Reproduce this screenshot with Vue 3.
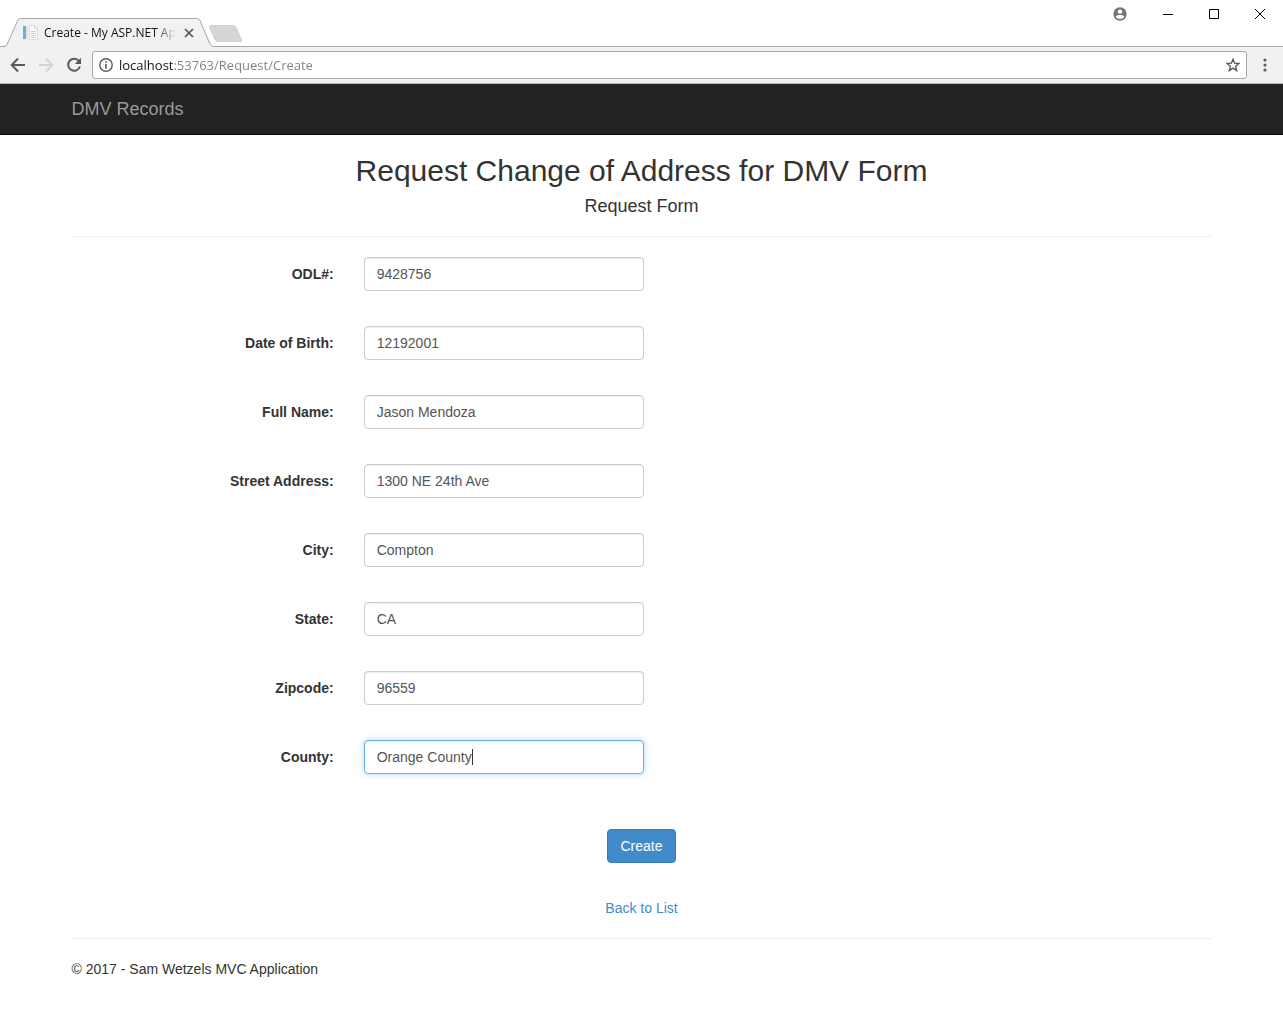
<script setup>
import { reactive, ref } from 'vue'

const address = ref('localhost:53763/Request/Create')
const fields = reactive([
  { id: 'odl', label: 'ODL#:', value: '9428756' },
  { id: 'dob', label: 'Date of Birth:', value: '12192001' },
  { id: 'name', label: 'Full Name:', value: 'Jason Mendoza' },
  { id: 'street', label: 'Street Address:', value: '1300 NE 24th Ave' },
  { id: 'city', label: 'City:', value: 'Compton' },
  { id: 'state', label: 'State:', value: 'CA' },
  { id: 'zip', label: 'Zipcode:', value: '96559' },
  { id: 'county', label: 'County:', value: 'Orange County', active: true },
])
</script>

<template>
  <div class="window">
    <header class="chrome">
      <div class="tabstrip">
        <div class="tab">
          <svg class="tab-shape" width="214" height="29" viewBox="0 0 214 29" aria-hidden="true">
            <path d="M0 29V28.500H4Q6 28.500 7 26.500L17.500 3Q18.500 .5 20.500 .5H197Q199 .5 200 2.500L210 26Q211 28.500 213 28.500H214V29Z" fill="#f1f1f1" />
            <path d="M0 28.500H4Q6 28.500 7 26.500L17.500 3Q18.500 .5 20.500 .5H197Q199 .5 200 2.500L210 26Q211 28.500 213 28.500H214" fill="none" stroke="#a8a8a8" />
          </svg>
          <svg class="favicon" width="16" height="16" viewBox="0 0 16 16" aria-hidden="true">
            <path d="M0 1H3V14H0Z" fill="#6fb3cd" />
            <path d="M3 2H5V14H3Z" fill="#dce6ea" />
            <path d="M6.500 .5H12L14.500 3V14.500H6.500Z" fill="#fafafa" stroke="#dcdfe1" />
            <path d="M11.500 1V3.500H14M8 6.500H13M8 8.500H13M8 10.500H13M8 12.500H13" fill="none" stroke="#ccd4d8" />
          </svg>
          <span class="tab-title">Create - My ASP.NET App</span>
          <button class="tab-close" type="button" aria-label="Close tab">
            <svg width="10" height="10" viewBox="0 0 10 10"><path d="M1 1L9 9M9 1L1 9" stroke="#555" stroke-width="1.700" /></svg>
          </button>
        </div>
        <button class="new-tab" type="button" aria-label="New tab">
          <svg width="36" height="18" viewBox="0 0 36 18"><path d="M3 .5H25Q27 .5 28 2.500L33.500 14.500Q34.500 16.500 32 16.500H10Q8 16.500 7 14.500L1.500 2.500Q.8 .5 3 .5Z" fill="#d6d6d6" stroke="#d0d0d0" /></svg>
        </button>
        <div class="window-controls">
          <button type="button" aria-label="Profile">
            <svg width="14" height="14" viewBox="0 0 14 14"><circle cx="7" cy="7" r="6.700" fill="#757575" /><circle cx="7" cy="4.600" r="2.200" fill="#fff" /><path d="M2.700 9.800C3.400 7.500 10.600 7.500 11.300 9.800C10.300 11.300 8.700 12 7 12S3.700 11.300 2.700 9.800Z" fill="#fff" /></svg>
          </button>
          <button type="button" aria-label="Minimize">
            <svg width="12" height="12" viewBox="0 0 12 12"><path d="M1 6.500H11" stroke="#000" /></svg>
          </button>
          <button type="button" aria-label="Maximize">
            <svg width="12" height="12" viewBox="0 0 12 12"><path d="M1.500 1.500H10.500V10.500H1.500Z" fill="none" stroke="#000" /></svg>
          </button>
          <button type="button" aria-label="Close">
            <svg width="12" height="12" viewBox="0 0 12 12"><path d="M1 1L11 11M11 1L1 11" stroke="#000" /></svg>
          </button>
        </div>
      </div>
      <div class="toolbar">
        <button type="button" aria-label="Back">
          <svg width="16" height="16" viewBox="0 0 16 16"><path d="M15 8H2M8 1.500L1.700 8L8 14.500" fill="none" stroke="#5a5a5a" stroke-width="2" /></svg>
        </button>
        <button type="button" aria-label="Forward" disabled>
          <svg width="16" height="16" viewBox="0 0 16 16"><path d="M1 8H14M8 1.500L14.300 8L8 14.500" fill="none" stroke="#d3d3d3" stroke-width="2" /></svg>
        </button>
        <button type="button" aria-label="Reload">
          <svg width="16" height="16" viewBox="0 0 16 16"><path d="M13 4.200A6 6 0 1 0 13.900 9.500" fill="none" stroke="#5a5a5a" stroke-width="2" /><path d="M15 .8V7H8.800Z" fill="#5a5a5a" /></svg>
        </button>
        <div class="omnibox">
          <svg width="14" height="14" viewBox="0 0 14 14" aria-hidden="true"><circle cx="7" cy="7" r="6.200" fill="none" stroke="#5a5a5a" stroke-width="1.400" /><path d="M6.200 3.200H7.800V4.800H6.200ZM6.200 6H7.800V10.800H6.200Z" fill="#5a5a5a" /></svg>
          <input v-model="address" class="address" type="text" aria-label="Address" spellcheck="false" />
          <button class="star" type="button" aria-label="Bookmark this page">
            <svg width="14" height="14" viewBox="0 0 14 14"><path d="M7 1.200L8.600 5.200L13 5.500L9.600 8.300L10.700 12.600L7 10.200L3.300 12.600L4.400 8.300L1 5.500L5.400 5.200Z" fill="none" stroke="#5a5a5a" stroke-width="1.400" /></svg>
          </button>
        </div>
        <button class="menu" type="button" aria-label="Menu">
          <svg width="4" height="14" viewBox="0 0 4 14"><circle cx="2" cy="2" r="1.600" fill="#5a5a5a" /><circle cx="2" cy="7" r="1.600" fill="#5a5a5a" /><circle cx="2" cy="12" r="1.600" fill="#5a5a5a" /></svg>
        </button>
      </div>
    </header>

    <nav class="navbar">
      <div class="container">
        <a class="brand" href="#">DMV Records</a>
      </div>
    </nav>

    <main class="container">
      <h2>Request Change of Address for DMV Form</h2>
      <h4>Request Form</h4>
      <hr />
      <form @submit.prevent>
        <div v-for="field in fields" :key="field.id" class="form-group">
          <label :for="field.id">{{ field.label }}</label>
          <div class="control">
            <input :id="field.id" v-model="field.value" type="text" :class="{ active: field.active }" />
            <span v-if="field.active" class="caret"></span>
          </div>
        </div>
        <button class="submit" type="submit">Create</button>
      </form>
      <a class="back" href="#">Back to List</a>
      <hr />
      <footer>© 2017 - Sam Wetzels MVC Application</footer>
    </main>
  </div>
</template>

<style>
body {
  margin: 0;
  background: #fff;
}
</style>

<style scoped>
* {
  box-sizing: border-box;
}

.window {
  font: 14px/20px "Liberation Sans", Arial, sans-serif;
  color: #333;
}

svg {
  display: block;
}

.chrome {
  font-family: "Open Sans", "Noto Sans", sans-serif;
}

.chrome button {
  display: flex;
  align-items: center;
  justify-content: center;
  padding: 0;
  border: 0;
  background: none;
}

.tabstrip {
  display: flex;
  align-items: flex-end;
  height: 47px;
  background: linear-gradient(#a8a8a8, #a8a8a8) bottom / 100% 1px no-repeat;
}

.tab {
  position: relative;
  display: flex;
  align-items: center;
  width: 214px;
  height: 29px;
  padding-left: 23px;
}

.tab-shape {
  position: absolute;
  inset: 0;
}

.favicon,
.tab-title,
.tab-close {
  position: relative;
}

.tab-title {
  width: 132px;
  margin: 0 8px 0 5px;
  white-space: nowrap;
  font-size: 12px;
  color: #111;
  mask-image: linear-gradient(to right, #000 112px, transparent);
}

.new-tab {
  margin: 0 0 4px -6px;
}

.window-controls {
  display: flex;
  align-self: flex-start;
  margin-left: auto;
}

.window-controls button {
  width: 46px;
  height: 28px;
}

.window-controls button:first-child {
  width: 50px;
}

.toolbar {
  display: flex;
  align-items: center;
  height: 37px;
  padding: 0 10px;
  background: #f1f1f1;
  border-bottom: 1px solid #b5b5b5;
}

.toolbar > button {
  width: 16px;
  height: 28px;
  margin-right: 12px;
}

.omnibox {
  display: flex;
  flex: 1;
  align-items: center;
  height: 28px;
  margin-right: 16px;
  margin-left: -2px;
  padding: 0 6px;
  background: #fff;
  border: 1px solid #a8a8a8;
  border-radius: 3px;
}

.address {
  flex: 1;
  min-width: 0;
  margin: 0 6px;
  padding: 0;
  border: 0;
  outline: 0;
  font: 13px/20px "Open Sans", "Noto Sans", sans-serif;
  background: linear-gradient(to right, #111 54px, #808080 54px);
  background-clip: text;
  -webkit-text-fill-color: transparent;
}

.toolbar > .menu {
  width: 4px;
  margin-right: 6px;
}

.navbar {
  background: #222;
  border-bottom: 1px solid #080808;
}

.container {
  max-width: 1170px;
  margin: 0 auto;
  padding: 0 15px;
}

.brand {
  display: inline-block;
  padding: 15px 0;
  font-size: 18px;
  line-height: 20px;
  vertical-align: top;
  color: #999;
  text-decoration: none;
}

h2,
h4 {
  font-weight: 400;
  text-align: center;
}

h2 {
  margin: 19px 0 8px;
  font-size: 30px;
  line-height: 34px;
}

h4 {
  margin: 0;
  font-size: 18px;
  line-height: 20px;
}

hr {
  margin: 20px 0;
  border: 0;
  border-top: 1px solid #eee;
}

.form-group {
  display: grid;
  grid-template-columns: 23% 280px;
  column-gap: 30px;
  align-items: center;
  margin-bottom: 35px;
}

label {
  font-weight: 700;
  text-align: right;
}

.control {
  position: relative;
}

.control input {
  display: block;
  width: 100%;
  height: 34px;
  padding: 6px 12px;
  border: 1px solid #ccc;
  border-radius: 4px;
  outline: 0;
  background: #fff;
  box-shadow: inset 0 1px 1px rgba(0, 0, 0, 0.075);
  font: inherit;
  color: #555;
}

.control input.active {
  border-color: #66afe9;
  box-shadow: inset 0 1px 1px rgba(0, 0, 0, 0.075), 0 0 6px rgba(102, 175, 233, 0.5);
}

.caret {
  position: absolute;
  top: 9px;
  left: 108px;
  width: 1px;
  height: 16px;
  background: #333;
}

.submit {
  display: block;
  height: 34px;
  margin: 55px auto 35px;
  padding: 6px 12px;
  border: 1px solid #357ebd;
  border-radius: 4px;
  background: #428bca;
  font: inherit;
  color: #fff;
}

.back {
  display: block;
  width: fit-content;
  margin: 0 auto;
  color: #428bca;
  text-decoration: none;
}
</style>
